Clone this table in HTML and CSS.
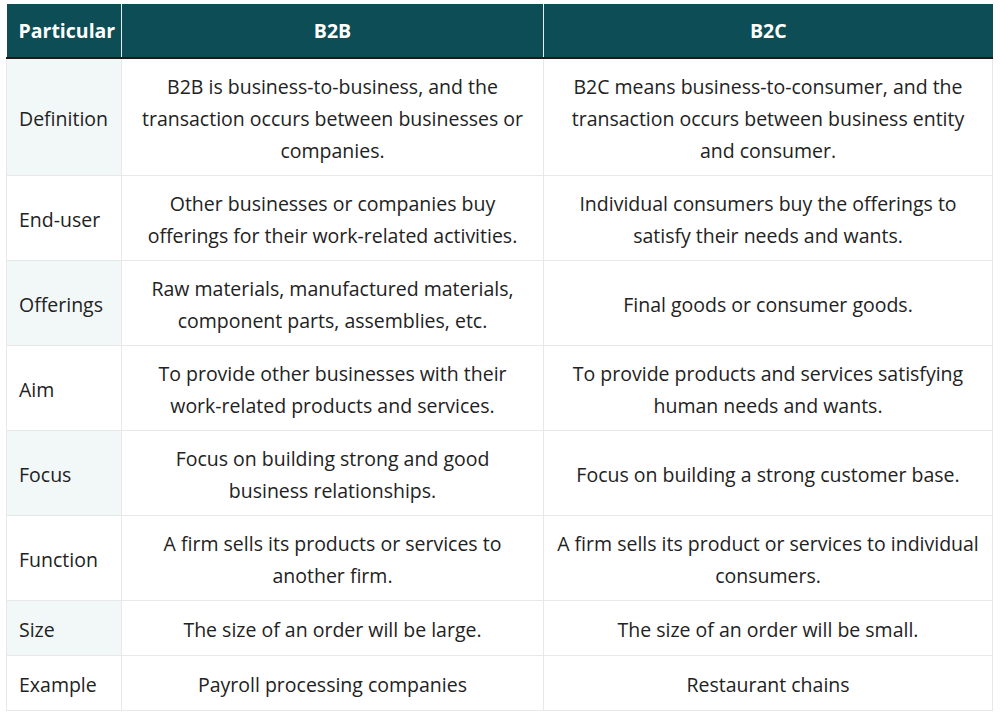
FILE: index.html
```html
<!DOCTYPE html>
<html>
<head>
<meta charset="utf-8">
<link rel="stylesheet" href="styles.css">
</head>
<body>
<table class="cmp">
  <colgroup>
    <col class="c1"><col class="c2"><col class="c3">
  </colgroup>
  <thead>
    <tr><th class="first">Particular</th><th>B2B</th><th>B2C</th></tr>
  </thead>
  <tbody>
    <tr><td class="label">Definition</td><td>B2B is business-to-business, and the transaction occurs between businesses or companies.</td><td>B2C means business-to-consumer, and the transaction occurs between business entity and consumer.</td></tr>
    <tr><td class="label">End-user</td><td>Other businesses or companies buy offerings for their work-related activities.</td><td>Individual consumers buy the offerings to satisfy their needs and wants.</td></tr>
    <tr><td class="label">Offerings</td><td>Raw materials, manufactured materials, component parts, assemblies, etc.</td><td>Final goods or consumer goods.</td></tr>
    <tr><td class="label">Aim</td><td>To provide other businesses with their <span class="nw">work-related</span> products and services.</td><td>To provide products and services satisfying human needs and wants.</td></tr>
    <tr><td class="label">Focus</td><td>Focus on building strong and good business relationships.</td><td>Focus on building a strong customer base.</td></tr>
    <tr><td class="label">Function</td><td>A firm sells its products or services to another firm.</td><td>A firm sells its product or services to individual consumers.</td></tr>
    <tr><td class="label">Size</td><td>The size of an order will be large.</td><td>The size of an order will be small.</td></tr>
    <tr><td class="label">Example</td><td>Payroll processing companies</td><td>Restaurant chains</td></tr>
  </tbody>
</table>
</body>
</html>
```
FILE: styles.css
```css
html, body {
  margin: 0;
  padding: 0;
  background: #ffffff;
}
body {
  padding: 4px 0 0 6px;
  font-family: "Open Sans", "Noto Sans", sans-serif;
  color: #222222;
}
.cmp {
  border-collapse: collapse;
  width: 986px;
  table-layout: fixed;
  font-size: 19.5px;
  line-height: 32px;
}
.c1 { width: 115px; }
.c2 { width: 422px; }
.c3 { width: 449px; }
.cmp th {
  background: #0d4d55;
  color: #ffffff;
  font-weight: 700;
  height: 53px;
  padding: 0 12px;
  text-align: center;
  border-left: 1px solid #e6eeee;
  border-bottom: 2px solid #1a1a1a;
}
.cmp th.first {
  text-align: left;
  border-left: none;
}
.cmp td {
  border: 1px solid #e8e8e8;
  padding: 12px 12px 8px 12px;
  text-align: center;
  vertical-align: middle;
  height: 34px;
}
.cmp td.label {
  text-align: left;
}
.cmp tbody tr:nth-child(odd) td.label {
  background: #f2f8f8;
}
.nw {
  white-space: nowrap;
}
```
